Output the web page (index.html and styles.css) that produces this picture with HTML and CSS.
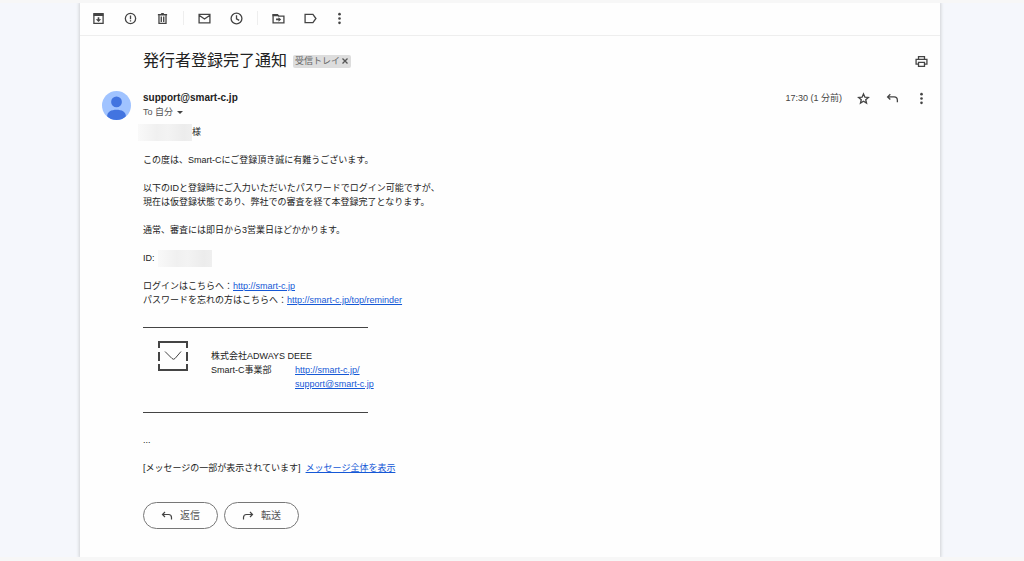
FILE: index.html
```html
<!DOCTYPE html>
<html lang="ja">
<head>
<meta charset="utf-8">
<meta name="viewport" content="width=device-width, initial-scale=1">
<title>発行者登録完了通知</title>
<link rel="stylesheet" href="styles.css">
</head>
<body>
<main class="sheet">
  <nav class="toolbar" aria-label="メール操作">
    <button class="icon-btn" aria-label="アーカイブ"><svg viewBox="0 0 24 24"><path d="M3.500 3h17v18h-17z" class="line"/><path d="M3 3h18v4.500H3zM10.500 9.500h3v4H17L12 18.500l-5-5h3.500z"/></svg></button>
    <button class="icon-btn" aria-label="迷惑メールを報告"><svg viewBox="0 0 24 24"><circle cx="12" cy="12" r="9.500" class="line"/><path d="M10.800 6.500h2.400v7h-2.400zM10.800 15.200h2.400v2.400h-2.400z"/></svg></button>
    <button class="icon-btn" aria-label="削除"><svg viewBox="0 0 24 24"><path d="M5.500 6v15h13V6" class="line"/><path d="M3.500 3.500H9L10 2h4l1 1.500h5.500v3h-17zM8.500 8.500h2.500v10H8.500zM13 8.500h2.500v10H13z"/></svg></button>
    <span class="divider"></span>
    <button class="icon-btn" aria-label="未読にする"><svg viewBox="0 0 24 24"><path d="M2 4.500h20v15.500H2zM2 6l10 7 10-7" class="line"/></svg></button>
    <button class="icon-btn" aria-label="スヌーズ"><svg viewBox="0 0 24 24"><circle cx="12" cy="12" r="10" class="line"/><path d="M12 6v6.500l5 3" class="line"/></svg></button>
    <span class="divider"></span>
    <button class="icon-btn" aria-label="移動"><svg viewBox="0 0 24 24"><path d="M2 5h8l2.500 2.500H22v12.500H2z" class="line"/><path d="M1 4h9l3 4H1zM7.500 12.200H12V9.500l5 4.200-5 4.300v-2.700H7.500z"/></svg></button>
    <button class="icon-btn" aria-label="ラベル"><svg viewBox="0 0 24 24"><path d="M2 4.500h14.500l5.500 7.500-5.500 7.500H2z" class="line"/></svg></button>
    <button class="icon-btn" aria-label="その他"><svg viewBox="0 0 24 24"><circle cx="12" cy="4" r="2.400"/><circle cx="12" cy="12" r="2.400"/><circle cx="12" cy="20" r="2.400"/></svg></button>
  </nav>

  <article class="mail">
    <header class="subject-row">
      <h1 class="subject">発行者登録完了通知</h1>
      <span class="tag">受信トレイ<button class="tag-close" aria-label="ラベルを外す"><svg viewBox="0 0 8 8"><path d="M1.500 1.500l5 5M6.500 1.500l-5 5"/></svg></button></span>
      <button class="icon-btn print" aria-label="印刷"><svg viewBox="0 0 24 24"><path d="M6.500 8V3h11v5M6.500 17H2V8h20v9h-4.500M6.500 13.500h11V21h-11z" class="line"/></svg></button>
    </header>

    <section class="sender">
      <svg class="avatar" viewBox="0 0 28 28" aria-hidden="true"><defs><clipPath id="disc"><circle cx="14" cy="14" r="14"/></clipPath></defs><g clip-path="url(#disc)"><rect width="28" height="28" class="avatar-back"/><circle cx="14" cy="10.500" r="5.200" class="avatar-body"/><path d="M5 24c0-4 4-6 9-6s9 2 9 6v1l-4 3H9l-4-3z" class="avatar-body"/></g></svg>
      <div class="who">
        <strong class="address">support@smart-c.jp</strong>
        <button class="recipient">To 自分<svg viewBox="0 0 6 3"><path d="M0 0h6L3 3z"/></svg></button>
      </div>
      <div class="meta">
        <time class="time">17:30 (1 分前)</time>
        <button class="icon-btn" aria-label="スター"><svg viewBox="0 0 24 24"><path d="M12 3.500l2.600 6 6.400.5-4.900 4.300 1.500 6.300-5.600-3.400-5.600 3.400 1.500-6.300L3 10l6.400-.5z" class="line"/></svg></button>
        <button class="icon-btn" aria-label="返信"><svg viewBox="0 0 24 24"><path d="M8 4L3 9l5 5M3 9h12c4 0 6 2.500 6 6v4" class="line"/></svg></button>
        <button class="icon-btn" aria-label="その他"><svg viewBox="0 0 24 24"><circle cx="12" cy="4" r="2.400"/><circle cx="12" cy="12" r="2.400"/><circle cx="12" cy="20" r="2.400"/></svg></button>
      </div>
    </section>

    <div class="message">
      <p class="addressee"><span class="masked"></span>様</p>
      <p>この度は、Smart-Cにご登録頂き誠に有難うございます。</p>
      <p>以下のIDと登録時にご入力いただいたパスワードでログイン可能ですが、<br>現在は仮登録状態であり、弊社での審査を経て本登録完了となります。</p>
      <p>通常、審査には即日から3営業日ほどかかります。</p>
      <p class="account">ID:<span class="masked"></span></p>
      <p>ログインはこちらへ：<a href="#login">http://smart-c.jp</a><br>パスワードを忘れの方はこちらへ：<a href="#reminder">http://smart-c.jp/top/reminder</a></p>
      <div class="signature">
        <svg class="logo" viewBox="0 0 30 30" aria-hidden="true"><path d="M1 7V1h28v6M1 11v9M29 11v9M1 23v6h28v-6" class="frame"/><path d="M7 10.500l7 7q1.500 1.500 3 0l6-7" class="flap"/></svg>
        <div class="company">株式会社ADWAYS DEEE</div>
        <div class="division">Smart-C事業部</div>
        <div class="contacts"><a href="#site">http://smart-c.jp/</a><br><a href="#support">support@smart-c.jp</a></div>
      </div>
      <p>...</p>
      <p class="clipped">[メッセージの一部が表示されています]<a href="#full">メッセージ全体を表示</a></p>
    </div>

    <footer class="actions">
      <button class="pill"><svg viewBox="0 0 24 24"><path d="M8 4L3 9l5 5M3 9h12c4 0 6 2.500 6 6v4" class="line"/></svg>返信</button>
      <button class="pill"><svg viewBox="0 0 24 24"><path d="M16 4l5 5-5 5M21 9H9c-4 0-6 2.500-6 6v4" class="line"/></svg>転送</button>
    </footer>
  </article>
</main>
</body>
</html>
```
FILE: styles.css
```css
* { box-sizing: border-box; }

body {
  margin: 0;
  padding: 3px 0 4px;
  background: linear-gradient(#f7f7f7 3px, #f5f7fc 3px, #f5f7fc calc(100% - 4px), #f7f7f7 calc(100% - 4px));
  color: #222;
  font-family: "Liberation Sans", "Noto Sans CJK JP", sans-serif;
  font-size: 9px;
  line-height: 14px;
  min-height: 100vh;
  display: flex;
}

button {
  border: 0;
  padding: 0;
  background: none;
  color: inherit;
  font: inherit;
  cursor: pointer;
}

svg { display: block; fill: #444; }
.line { fill: none; stroke: #444; stroke-width: 2.4; }
a { color: #1558d6; }
p { margin: 0 0 14px; }

.sheet {
  flex: 1;
  margin: 0 84px 0 80px;
  background: #fefefe;
  box-shadow: 0 0 3px 1px #d0d2d6;
  clip-path: inset(0 -6px);
}

.toolbar {
  display: flex;
  align-items: center;
  gap: 19px;
  height: 33px;
  padding: 0 12px 2px;
  border-bottom: 1px solid #eee;
}

.icon-btn {
  display: grid;
  place-items: center;
  width: 13px;
  height: 13px;
  flex: none;
}
.icon-btn svg { width: 13px; height: 13px; }
.toolbar .icon-btn:last-child { margin-left: -3px; }

.divider { width: 1px; height: 14px; margin: 0 -5px; background: #eee; }

.mail { padding: 12px 12px 28px 22px; }

.subject-row {
  display: flex;
  align-items: center;
  gap: 6px;
  height: 26px;
  padding-left: 41px;
}
.subject { margin: 0; font-size: 16px; font-weight: 400; line-height: 24px; }
.tag {
  display: flex;
  align-items: center;
  gap: 1px;
  height: 13px;
  padding: 0 2px;
  border-radius: 2px;
  background: #ddd;
  color: #666;
  line-height: 13px;
}
.tag-close svg { width: 8px; height: 8px; fill: none; stroke: #555; stroke-width: 1.3; }
.print { margin-left: auto; }

.sender { display: flex; margin-top: 17px; }
.avatar { width: 29px; height: 29px; margin-right: 12px; }
.avatar-back { fill: #a0c3ff; }
.avatar-body { fill: #4274e0; }
.who { display: flex; flex-direction: column; align-items: flex-start; }
.address { font-size: 10px; }
.recipient { display: flex; align-items: center; gap: 4px; color: #555; }
.recipient svg { width: 6px; height: 3px; }
.meta {
  display: flex;
  align-items: center;
  gap: 16px;
  height: 14px;
  margin-left: auto;
  color: #444;
}
.time { margin-right: -1px; }

.message { margin-top: 5px; padding-left: 41px; }
.addressee, .account { display: flex; align-items: center; height: 14px; }
.masked {
  width: 54px;
  height: 17px;
  background: linear-gradient(90deg, #f9f9f9, #f0f0f0 35%, #f3f3f3 55%, #ececec 85%, #efefef);
}
.addressee .masked { margin-left: -5px; }
.account .masked { margin-left: 3px; }

.signature {
  display: grid;
  grid-template-columns: 68px 84px 1fr;
  width: 225px;
  margin: 20px 0;
  padding: 21px 0;
  border: solid #444;
  border-width: 1px 0;
}
.logo { grid-row: 1 / 3; width: 30px; height: 30px; margin: -8px 0 0 15px; }
.frame { fill: none; stroke: #444; stroke-width: 2; }
.flap { fill: none; stroke: #444; stroke-width: 1; }
.company { grid-column: 2 / 4; }
.division { grid-column: 2; }
.contacts { grid-column: 3; white-space: nowrap; }

.clipped { display: flex; gap: 5px; }

.actions { display: flex; gap: 6px; margin-top: 27px; padding-left: 41px; }
.message p:last-child { margin-bottom: 0; }
.pill {
  display: flex;
  align-items: center;
  justify-content: center;
  gap: 7px;
  width: 75px;
  height: 27px;
  border: 1px solid #777;
  border-radius: 14px;
  color: #555;
  font-size: 10px;
}
.pill svg { width: 12px; height: 12px; }
```
